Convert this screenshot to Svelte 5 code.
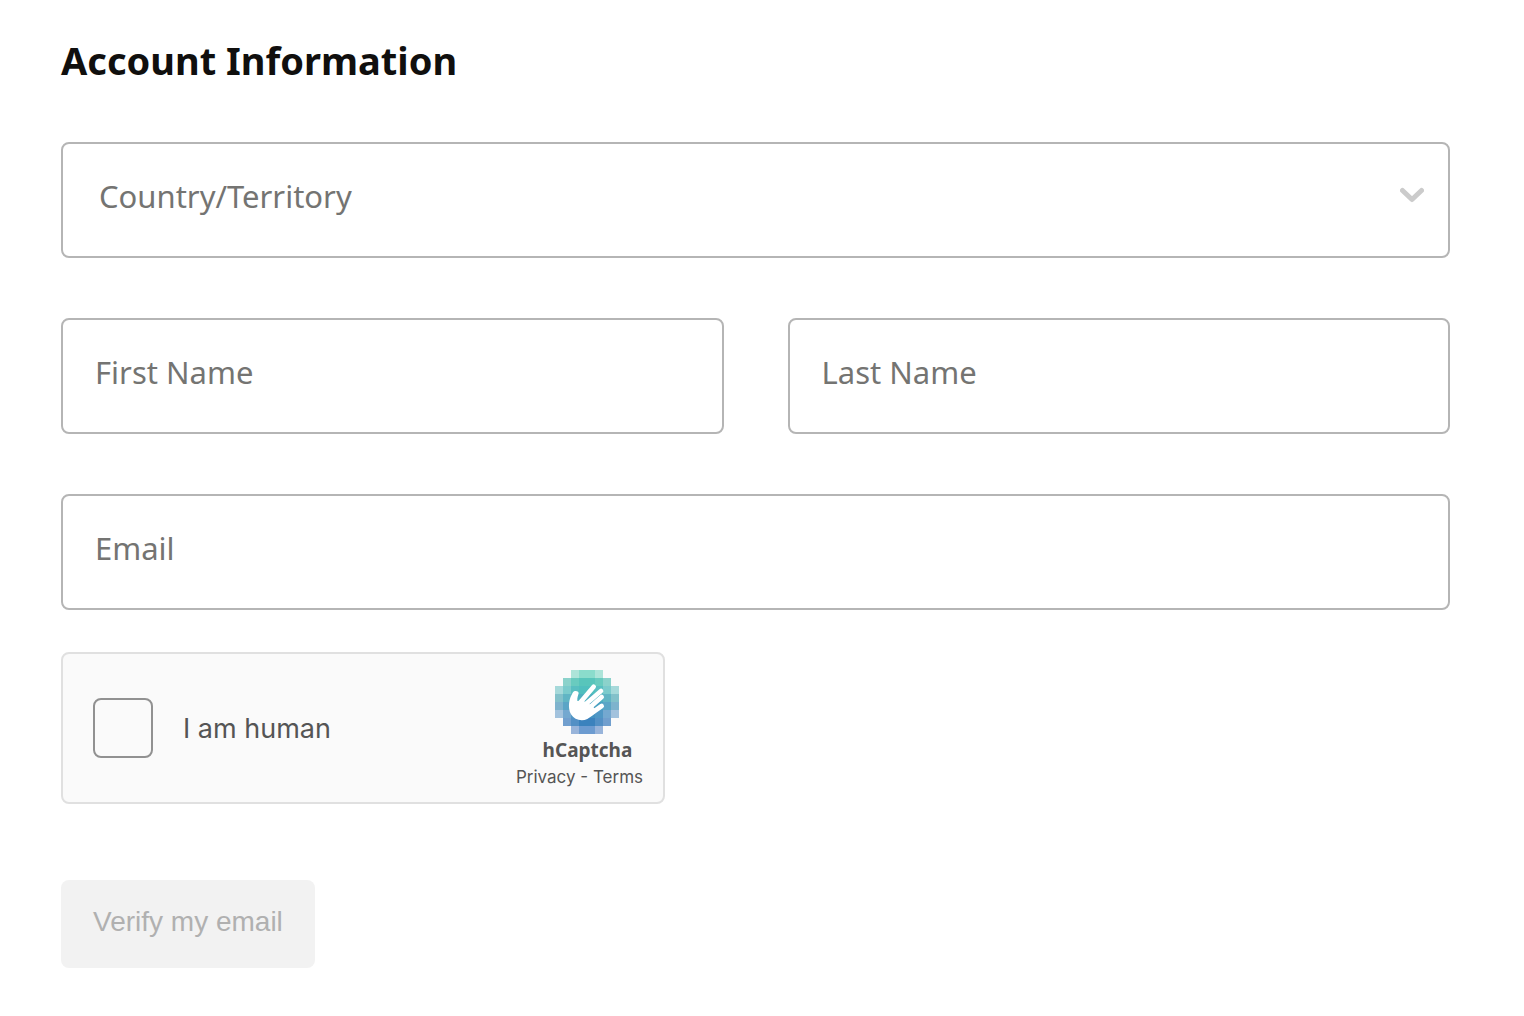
<script>
  let country = $state('');
  let firstName = $state('');
  let lastName = $state('');
  let email = $state('');
  let human = $state(false);

  // One row per line of the logo mosaic: first column, then the colour of each cell.
  const mosaic = [
    [2, ['#ade4d9', '#8adccc', '#8adccc', '#ade4d9']],
    [1, ['#8bd2cb', '#69cbbf', '#58c5bb', '#58c5bb', '#69cbbf', '#8bd2cb']],
    [0, ['#a6d9da', '#7bcbcc', '#59bfc1', '#50bfbe', '#50bfbe', '#59bfc1', '#7bcbcc', '#a6d9da']],
    [0, ['#83c1ca', '#61b5c4', '#4eb0c0', '#4eb0c0', '#4eb0c0', '#4eb0c0', '#61b5c4', '#83c1ca']],
    [0, ['#7eb3cd', '#5ba5c6', '#48a0c1', '#48a0c1', '#48a0c1', '#48a0c1', '#5ba5c6', '#7eb3cd']],
    [0, ['#a2c2dd', '#74a8d0', '#5097c5', '#4592c2', '#4592c2', '#5097c5', '#74a8d0', '#a2c2dd']],
    [1, ['#719fce', '#5390c5', '#3b82bd', '#3b82bd', '#5390c5', '#719fce']],
    [2, ['#98b4da', '#6c9bd0', '#6c9bd0', '#98b4da']]
  ];
</script>

<main>
  <h1>Account Information</h1>

  <form onsubmit={(e) => e.preventDefault()}>
    <div class="fields">
      <div class="select-wrap">
        <select class="field" aria-label="Country/Territory" bind:value={country}>
          <option value="">Country/Territory</option>
          <option value="ca">Canada</option>
          <option value="gb">United Kingdom</option>
          <option value="us">United States</option>
        </select>
        <svg class="chevron" viewBox="0 0 24 16" aria-hidden="true">
          <path d="M2.5 3.5 12 12.5 21.5 3.5" />
        </svg>
      </div>

      <div class="pair">
        <input class="field" type="text" aria-label="First Name" placeholder="First Name" bind:value={firstName} />
        <input class="field" type="text" aria-label="Last Name" placeholder="Last Name" bind:value={lastName} />
      </div>

      <input class="field" type="email" aria-label="Email" placeholder="Email" bind:value={email} />
    </div>

    <div class="captcha">
      <label class="human">
        <input type="checkbox" bind:checked={human} />
        <span>I am human</span>
      </label>
      <div class="brand">
        <div class="mark">
          <svg class="logo" viewBox="48 30 192 192" aria-hidden="true">
            {#each mosaic as [start, cells], row}
              {#each cells as fill, i}
                <rect x={48 + (start + i) * 24} y={30 + row * 24} width="24" height="24" {fill} />
              {/each}
            {/each}
            <path
              fill="#fff"
              d="M102 97C105 91 118 91 119 99C118 106 114 113 115 122C117 125 121 122 124 118L158 136L174 153C165 162 153 172 145 177C128 185 106 180 96 163C85 143 90 115 102 97Z"
            />
            <g class="fingers">
              <path d="M127 124 164 80" />
              <path d="M138 134 186 93" />
              <path d="M148 146 188 111" />
              <path d="M154 162 188 138" />
            </g>
          </svg>
          <strong>hCaptcha</strong>
        </div>
        <span class="legal"><a href="#privacy">Privacy</a> - <a href="#terms">Terms</a></span>
      </div>
    </div>

    <button type="submit" disabled>Verify my email</button>
  </form>
</main>

<style>
  :global(body) {
    margin: 0;
    background: #fff;
  }

  main,
  main * {
    box-sizing: border-box;
  }

  main {
    padding: 32px 74px 48px 61px;
    font-family: 'Noto Sans', 'Open Sans', sans-serif;
  }

  h1 {
    margin: 0 0 54px;
    font-size: 38px;
    line-height: 56px;
    font-weight: 700;
    color: #100f0e;
  }

  .fields {
    display: grid;
    gap: 60px;
  }

  .pair {
    display: grid;
    grid-template-columns: 1fr 1fr;
    gap: 64px;
  }

  .field {
    display: block;
    width: 100%;
    min-width: 0;
    height: 116px;
    margin: 0;
    padding: 0 32px 8px;
    border: 2px solid #b5b5b5;
    border-radius: 8px;
    background: #fff;
    color: #747472;
    font-family: inherit;
    font-size: 31px;
    outline-color: #747472;
  }

  .field::placeholder {
    color: #747472;
    opacity: 1;
  }

  .select-wrap {
    position: relative;
  }

  select.field {
    appearance: none;
    padding-left: 36px;
  }

  .chevron {
    position: absolute;
    right: 26px;
    top: 45px;
    width: 24px;
    height: 16px;
    pointer-events: none;
  }

  .chevron path {
    fill: none;
    stroke: #cbcbcb;
    stroke-width: 5;
    stroke-linecap: round;
    stroke-linejoin: round;
  }

  .captcha {
    display: flex;
    align-items: center;
    justify-content: space-between;
    max-width: 604px;
    height: 152px;
    margin-top: 42px;
    padding: 0 20px 0 30px;
    border: 2px solid #e0e0e0;
    border-radius: 8px;
    background: #fafafa;
    color: #555;
    font-family: Inter, sans-serif;
  }

  .human {
    display: flex;
    align-items: center;
    gap: 30px;
    font-size: 27px;
  }

  .human input {
    appearance: none;
    width: 60px;
    height: 60px;
    margin: 0;
    border: 2px solid #919191;
    border-radius: 8px;
    background: #fafafa;
  }

  .human input:checked {
    background: #4592c2;
  }

  .brand {
    display: flex;
    flex-direction: column;
    align-items: center;
    padding-top: 2px;
  }

  .mark {
    display: flex;
    flex-direction: column;
    align-items: center;
    padding-left: 16px;
  }

  .logo {
    width: 64px;
    height: 64px;
  }

  .fingers {
    fill: none;
    stroke: #fff;
    stroke-width: 14;
    stroke-linecap: round;
  }

  strong {
    font-family: 'Noto Sans', sans-serif;
    font-size: 19px;
    line-height: 32px;
    font-weight: 700;
  }

  .legal {
    font-size: 17px;
    line-height: 22px;
  }

  .legal a {
    color: inherit;
    text-decoration: none;
  }

  button {
    height: 88px;
    margin-top: 76px;
    padding: 0 32px 4px;
    border: 0;
    border-radius: 8px;
    background: #f2f2f2;
    color: #b0b0b0;
    font-family: 'Liberation Sans', Arial, sans-serif;
    font-size: 28px;
  }
</style>
